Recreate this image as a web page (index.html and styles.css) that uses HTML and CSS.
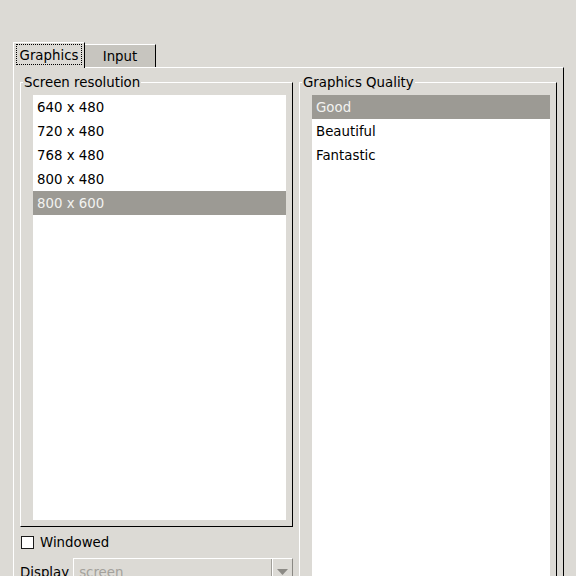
FILE: index.html
```html
<!DOCTYPE html>
<html>
<head>
<meta charset="utf-8">
<link rel="stylesheet" href="styles.css">
</head>
<body>
<div class="window">
  <div class="notebook">
    <div class="tabs">
      <div class="tab tab-active"><span class="focus">Graphics</span></div>
      <div class="tab tab-inactive">Input</div>
    </div>
    <div class="panel">
      <div class="col-left">
        <fieldset class="frame">
          <legend>Screen resolution</legend>
          <div class="frame-body">
            <div class="list list-left">
              <div class="row">640 x 480</div>
              <div class="row">720 x 480</div>
              <div class="row">768 x 480</div>
              <div class="row">800 x 480</div>
              <div class="row selected">800 x 600</div>
            </div>
          </div>
        </fieldset>
        <div class="check-row"><span class="checkbox"></span><span class="check-label">Windowed</span></div>
        <div class="display-row">
          <span class="display-label">Display</span>
          <div class="combo">
            <span class="combo-text">screen</span>
            <span class="combo-sep"></span>
            <span class="combo-btn"><svg width="11" height="6" viewBox="0 0 11 6"><polygon points="0,0 11,0 5.5,6" fill="#8c8a85"/></svg></span>
          </div>
        </div>
      </div>
      <fieldset class="frame frame-right">
        <legend>Graphics Quality</legend>
        <div class="frame-body">
          <div class="list list-right">
            <div class="row selected">Good</div>
            <div class="row">Beautiful</div>
            <div class="row">Fantastic</div>
          </div>
        </div>
      </fieldset>
    </div>
  </div>
</div>
</body>
</html>
```
FILE: styles.css
```css
html, body {
  margin: 0;
  height: 576px;
  overflow: hidden;
  background: #dcdad5;
  font-family: "DejaVu Sans", "Liberation Sans", sans-serif;
  font-size: 13.33px;
  color: #000;
}
.window {
  padding: 42px 0 0 13px;
}
.notebook {
  width: 551px;
}
.tabs {
  display: flex;
  align-items: flex-end;
}
.tab {
  line-height: 16px;
}
.tab-active {
  position: relative;
  z-index: 1;
  background: #dcdad5;
  border-left: 1px solid #fff;
  border-top: 1px solid #fff;
  border-right: 1px solid #000;
  padding: 1px 2px 3px;
  margin-bottom: -1px;
}
.focus {
  display: block;
  width: 66px;
  box-sizing: border-box;
  border: 1px dotted #000;
  padding: 3px 0 0;
  text-align: center;
}
.tab-inactive {
  width: 71px;
  box-sizing: border-box;
  background: #c7c5bf;
  border-top: 1px solid #fff;
  border-right: 1px solid #000;
  padding: 4px 0 2px;
  text-align: center;
}
.panel {
  border-left: 1px solid #fff;
  border-top: 1px solid #fff;
  border-right: 1px solid #000;
  height: 560px;
  overflow: hidden;
  padding: 6px 6px 0 6px;
  display: grid;
  grid-template-columns: 273px 258px;
  column-gap: 6px;
  align-items: start;
}
.col-left {
  display: flex;
  flex-direction: column;
}
.frame {
  margin: 0;
  padding: 0;
  min-width: 0;
  border: 1px solid;
  border-color: #fff #000 #000 #fff;
}
.frame legend {
  margin-left: 2px;
  padding: 2px 1px 0;
  line-height: 14px;
}
.frame-body {
  padding: 5px 6px 6px 12px;
}
.list {
  background: #fff;
}
.list-left {
  height: 425px;
}
.list-right {
  height: 560px;
}
.row {
  height: 24px;
  box-sizing: border-box;
  padding: 2px 0 0 4px;
  line-height: 22px;
  white-space: nowrap;
}
.row.selected {
  background: #9c9a94;
  color: #f2f2f0;
}
.check-row {
  display: flex;
  align-items: flex-start;
  margin-top: 8px;
  margin-left: 1px;
  gap: 6px;
  line-height: 16px;
}
.checkbox {
  width: 13px;
  height: 13px;
  box-sizing: border-box;
  border: 1px solid #1a1a1a;
  background: #fff;
  margin-top: 1px;
}
.display-row {
  display: flex;
  align-items: center;
  margin-top: 7px;
  gap: 4px;
}
.display-label {
  line-height: 16px;
  padding-top: 2px;
}
.combo {
  flex: 1;
  height: 28px;
  box-sizing: border-box;
  border: 1px solid;
  border-color: #fff #8a8883 #8a8883 #fff;
  display: flex;
  align-items: stretch;
}
.combo-text {
  flex: 1;
  padding: 1px 0 0 5px;
  color: #a3a19b;
  line-height: 26px;
}
.combo-sep {
  width: 0;
  border-left: 1px solid #a09e98;
  border-right: 1px solid #fff;
}
.combo-btn {
  width: 19px;
  display: flex;
  align-items: center;
  justify-content: center;
}
.combo-btn svg {
  display: block;
}
```
